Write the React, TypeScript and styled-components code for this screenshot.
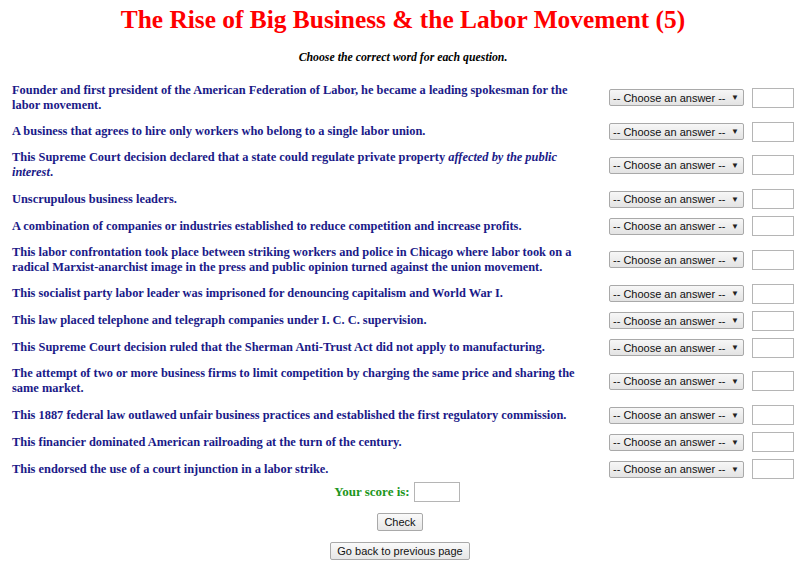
import React from "react";
import styled, { createGlobalStyle } from "styled-components";

const GlobalStyle = createGlobalStyle`
  html, body {
    margin: 0;
    padding: 0;
    background: #ffffff;
  }
  body {
    font-family: "Liberation Serif", "Times New Roman", serif;
  }
`;

const questions: { text: React.ReactNode }[] = [
  {
    text: "Founder and first president of the American Federation of Labor, he became a leading spokesman for the labor movement.",
  },
  { text: "A business that agrees to hire only workers who belong to a single labor union." },
  {
    text: (
      <>
        This Supreme Court decision declared that a state could regulate private property{" "}
        <em>affected by the public interest</em>.
      </>
    ),
  },
  { text: "Unscrupulous business leaders." },
  { text: "A combination of companies or industries established to reduce competition and increase profits." },
  {
    text: "This labor confrontation took place between striking workers and police in Chicago where labor took on a radical Marxist-anarchist image in the press and public opinion turned against the union movement.",
  },
  { text: "This socialist party labor leader was imprisoned for denouncing capitalism and World War I." },
  { text: "This law placed telephone and telegraph companies under I. C. C. supervision." },
  { text: "This Supreme Court decision ruled that the Sherman Anti-Trust Act did not apply to manufacturing." },
  {
    text: "The attempt of two or more business firms to limit competition by charging the same price and sharing the same market.",
  },
  { text: "This 1887 federal law outlawed unfair business practices and established the first regulatory commission." },
  { text: "This financier dominated American railroading at the turn of the century." },
  { text: "This endorsed the use of a court injunction in a labor strike." },
];

const Page = styled.div`
  padding: 6px 6px 0 12px;
`;

const Title = styled.h1`
  margin: 0;
  text-align: center;
  color: #ff0000;
  font-size: 25.4px;
  line-height: 26px;
  font-weight: bold;
`;

const Subtitle = styled.p`
  margin: 18px 0 14px;
  text-align: center;
  font-size: 11.8px;
  line-height: 14px;
  font-weight: bold;
  font-style: italic;
  color: #000000;
`;

const List = styled.div`
  display: flex;
  flex-direction: column;
`;

const Row = styled.div`
  display: grid;
  grid-template-columns: 1fr 135px 42px;
  column-gap: 8px;
  align-items: center;
  padding: 3px 0 4px;
`;

const Question = styled.div`
  color: #1a1a88;
  font-size: 12.4px;
  line-height: 15px;
  font-weight: bold;
  padding: 1.75px 8px 1.75px 0;

  em {
    font-style: italic;
  }
`;

const Select = styled.div`
  display: flex;
  align-items: center;
  justify-content: space-between;
  height: 17px;
  box-sizing: border-box;
  padding: 0 4px 0 3px;
  border: 1px solid #a9a9a9;
  border-radius: 2px;
  background: linear-gradient(#f7f7f7, #e3e3e3);
  font-family: "Liberation Sans", Arial, sans-serif;
  font-size: 11px;
  color: #111;
`;

const Arrow = styled.span`
  font-size: 8px;
  color: #222;
`;

const Box = styled.div<{ $w: number }>`
  width: ${(p) => p.$w}px;
  height: 20px;
  box-sizing: border-box;
  border: 1px solid #b5b5b5;
  background: #fff;
`;

const Footer = styled.div`
  display: flex;
  flex-direction: column;
  align-items: center;
  padding-right: 6px;
`;

const Score = styled.div`
  display: flex;
  align-items: center;
  gap: 4px;
  color: #1c961c;
  font-size: 13px;
  font-weight: bold;
  margin-top: -1px;
  margin-right: 6px;
`;

const Button = styled.div<{ $top: number }>`
  margin-top: ${(p) => p.$top}px;
  height: 18px;
  box-sizing: border-box;
  padding: 0 6px;
  display: flex;
  align-items: center;
  border: 1px solid #a9a9a9;
  border-radius: 2px;
  background: linear-gradient(#fafafa, #e6e6e6);
  font-family: "Liberation Sans", Arial, sans-serif;
  font-size: 11px;
  color: #111;
`;

const App = () => {
  return (
    <Page>
      <GlobalStyle />
      <Title>The Rise of Big Business &amp; the Labor Movement (5)</Title>
      <Subtitle>Choose the correct word for each question.</Subtitle>
      <List>
        {questions.map((q, i) => (
          <Row key={i}>
            <Question>{q.text}</Question>
            <Select>
              <span>-- Choose an answer --</span>
              <Arrow>▼</Arrow>
            </Select>
            <Box $w={42} />
          </Row>
        ))}
      </List>
      <Footer>
        <Score>
          Your score is: <Box $w={46} />
        </Score>
        <Button $top={11}>Check</Button>
        <Button $top={11}>Go back to previous page</Button>
      </Footer>
    </Page>
  );
};

export default App;
